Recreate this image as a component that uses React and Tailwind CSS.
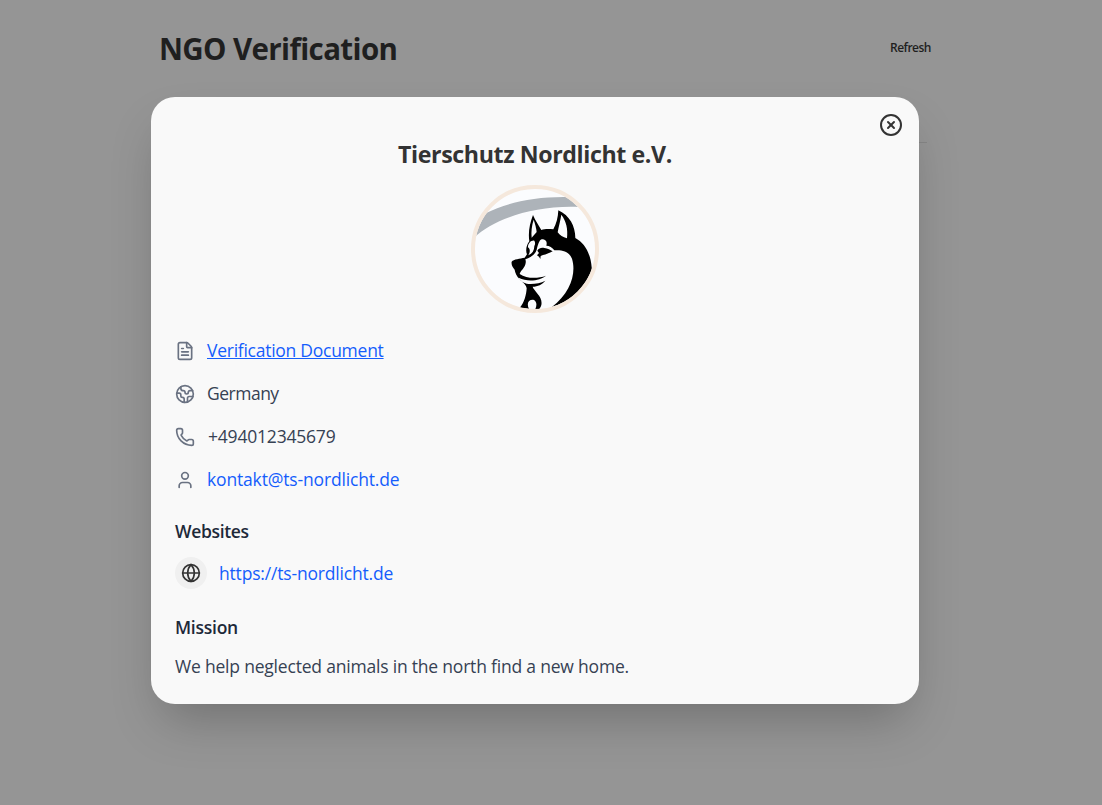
import { Earth, FileText, Phone, User, Globe, CircleX } from "lucide-react";

function Logo() {
  return (
    <svg viewBox="18 15 384 384" className="size-32" role="img" aria-label="Tierschutz Nordlicht logo">
      <defs>
        <clipPath id="disc">
          <circle cx="210" cy="207" r="181" />
        </clipPath>
      </defs>
      <g clipPath="url(#disc)">
        <rect x="18" y="15" width="384" height="384" fill="#fbfcfe" />
        <path d="M18 182C75 120 205 74 345 81L337 79L310 51C210 49 125 68 62 100L30 150Z" fill="#adb3b9" />
        <path
          d="M204 105C194 130 189 158 193 184C184 196 181 211 186 223L179 233C165 236 146 237 140 245C138 254 144 263 149 269C150 278 155 289 164 298C171 306 183 312 185 325C184 344 178 368 164 384L192 387C184 370 190 358 205 359C216 363 216 376 211 388L222 388C235 373 230 356 218 342C211 332 204 325 203 320C218 320 232 313 241 302C225 310 202 314 185 311C171 306 163 299 161 293C188 307 225 302 243 287C219 296 186 297 164 282C165 276 172 270 177 262C182 253 184 245 181 238C199 231 210 224 215 209C219 194 222 181 230 178C244 178 247 187 244 197C253 197 262 202 268 211C292 209 312 215 321 236C334 280 318 337 260 382L300 395C355 365 387 310 380 262C377 220 358 188 331 174C331 139 314 106 280 91C279 112 274 132 265 148C252 146 239 146 229 150C222 138 211 122 204 105Z"
          fill="#000"
        />
        <path d="M206 119C200 137 198 157 200 173L215 156C214 145 210 131 206 119Z" fill="#fbfcfe" />
        <path d="M289 104C286 123 281 139 278 157C284 166 294 172 306 175C309 147 304 124 289 104Z" fill="#fbfcfe" />
        <path d="M208 182C199 180 189 189 189 202C196 207 196 217 190 226C202 221 208 211 208 198C211 192 211 187 208 182Z" fill="#fbfcfe" />
        <path d="M217 212C222 203 231 202 238 204C248 205 256 209 263 214C253 219 243 224 234 225L227 228L226 237L222 230L216 226L222 219Z" fill="#000" />
      </g>
      <circle cx="210" cy="207" r="186" fill="none" stroke="#f5e8dc" strokeWidth="12" />
    </svg>
  );
}

function Row({ icon: Icon, children }) {
  return (
    <li className="flex h-[27px] items-center gap-3">
      <Icon className="size-5 text-gray-500" strokeWidth={2} />
      {children}
    </li>
  );
}

export default function App() {
  return (
    <div className="relative h-[805px] overflow-hidden bg-[#959595] font-['Open_Sans',sans-serif] text-[#333]">
      <header className="ml-[159px] flex h-[97px] w-[772px] items-center justify-between text-[#1f1f1f]">
        <h1 className="text-[29.5px] leading-9 font-bold tracking-[-0.63px]">NGO Verification</h1>
        <button className="pb-0.5 text-xs font-semibold tracking-[-0.5px]">Refresh</button>
      </header>
      <div className="absolute top-[142px] left-[151px] h-px w-[776px] bg-[#868686]" />
      <main className="relative ml-[151px] h-[607px] w-[768px] rounded-3xl bg-[#f9f9f9] px-6 pt-[41px] shadow-2xl">
        <button className="absolute top-4 right-4" aria-label="Close">
          <CircleX className="size-6" />
        </button>
        <div className="flex flex-col items-center gap-[15px]">
          <h2 className="text-[23.2px] leading-8 font-bold tracking-[-0.4px]">Tierschutz Nordlicht e.V.</h2>
          <Logo />
        </div>
        <ul className="mt-6 flex flex-col gap-4 text-[17.5px] leading-7 text-gray-700">
          <Row icon={FileText}><a className="pb-0.5 tracking-[-0.26px] text-blue-600 underline">Verification Document</a></Row>
          <Row icon={Earth}><span className="pb-0.5 tracking-[-0.5px]">Germany</span></Row>
          <Row icon={Phone}><span className="pb-0.5 pl-px tracking-[-0.2px]">+494012345679</span></Row>
          <Row icon={User}><a className="pb-0.5 tracking-[-0.16px] text-blue-600">kontakt@ts-nordlicht.de</a></Row>
        </ul>
        <h3 className="mt-6 text-[17.5px] leading-7 font-semibold tracking-[-0.35px] text-gray-800">Websites</h3>
        <div className="mt-3 flex items-center gap-3">
          <span className="grid size-8 place-items-center rounded-full bg-[#f0f0f0]"><Globe className="size-5" /></span>
          <a className="text-[17.5px] leading-7 tracking-[-0.18px] text-blue-600">https://ts-nordlicht.de</a>
        </div>
        <h3 className="mt-6 text-[17.5px] leading-7 font-semibold tracking-[-0.25px] text-gray-800">Mission</h3>
        <p className="mt-[11px] text-[17.5px] leading-7 tracking-[-0.2px] text-gray-700">We help neglected animals in the north find a new home.</p>
      </main>
    </div>
  );
}
